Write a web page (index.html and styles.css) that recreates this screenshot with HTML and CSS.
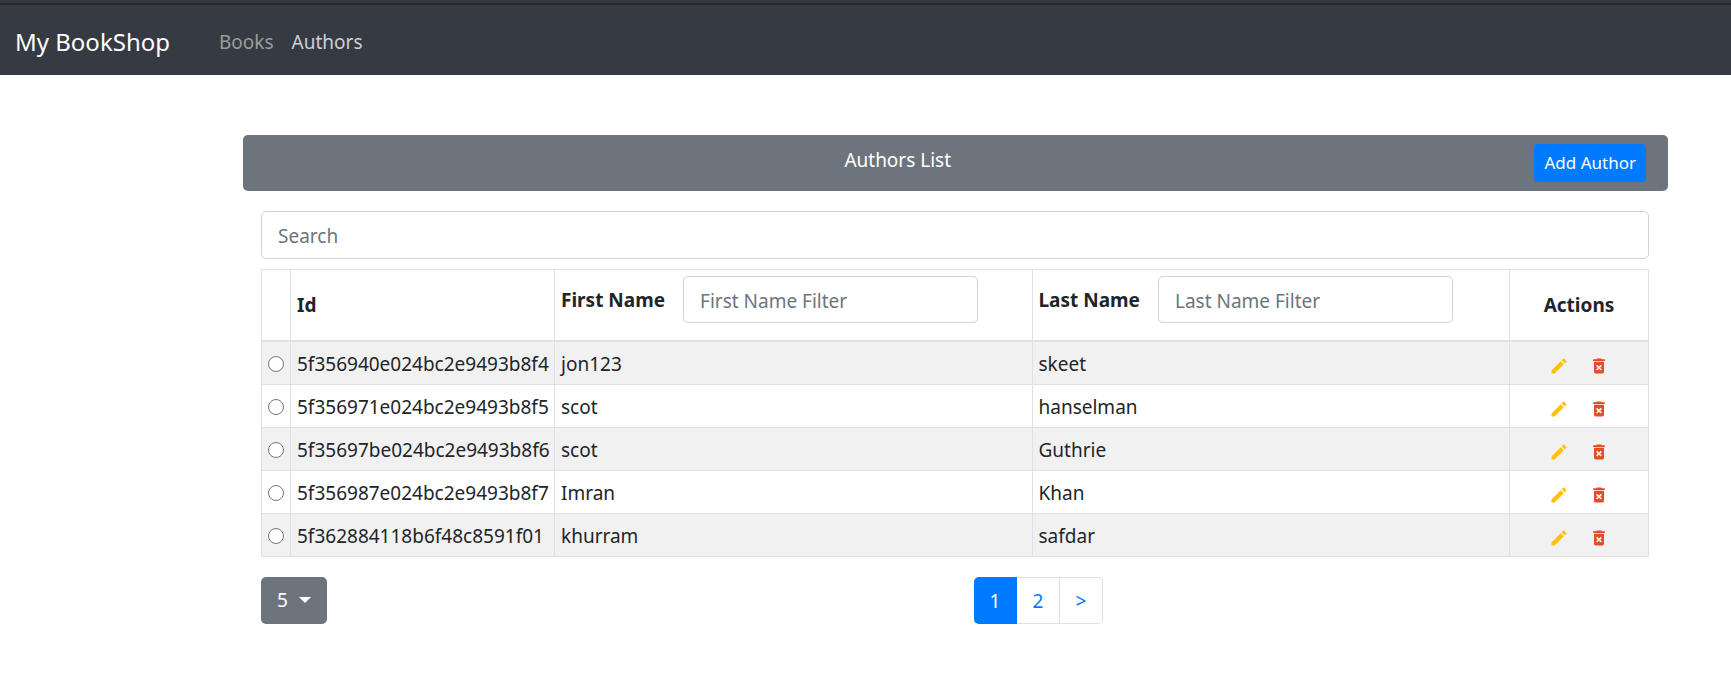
FILE: index.html
```html
<!DOCTYPE html>
<html lang="en">
<head>
<meta charset="utf-8">
<title>My BookShop</title>
<link rel="stylesheet" href="styles.css">
</head>
<body>
<svg class="sprite" aria-hidden="true">
  <symbol id="pencil" viewBox="0 0 24 24"><path d="M20.71 7.04c.39-.39.39-1.04 0-1.41l-2.34-2.34c-.37-.39-1.02-.39-1.41 0l-1.84 1.83 3.75 3.75M3 17.25V21h3.75L17.81 9.93l-3.75-3.75L3 17.25z"/></symbol>
  <symbol id="trash" viewBox="0 0 24 24"><path fill-rule="evenodd" d="M6 19a2 2 0 0 0 2 2h8a2 2 0 0 0 2-2V7H6v12zM8.46 11.88l1.41-1.41L12 12.59l2.12-2.12 1.41 1.41L13.41 14l2.12 2.12-1.41 1.41L12 15.41l-2.12 2.12-1.41-1.41L10.59 14l-2.13-2.12zM15.5 4l-1-1h-5l-1 1H5v2h14V4h-3.5z"/></symbol>
</svg>
<nav class="navbar">
  <a class="brand" href="#">My BookShop</a>
  <a class="nav-link" href="#">Books</a>
  <a class="nav-link active" href="#">Authors</a>
</nav>
<main class="page">
  <header class="card-header">
    <h1 class="title">Authors List</h1>
    <button class="add-button" type="button">Add Author</button>
  </header>
  <section class="content">
    <input class="field search" type="text" placeholder="Search" aria-label="Search">
    <table class="authors">
      <colgroup><col class="col-select"><col class="col-id"><col><col><col class="col-actions"></colgroup>
      <thead>
        <tr>
          <th></th>
          <th>Id</th>
          <th><div class="filter"><label for="first-filter">First Name</label><input class="field" id="first-filter" type="text" placeholder="First Name Filter"></div></th>
          <th><div class="filter"><label for="last-filter">Last Name</label><input class="field" id="last-filter" type="text" placeholder="Last Name Filter"></div></th>
          <th class="actions-head">Actions</th>
        </tr>
      </thead>
      <tbody>
        <tr>
          <td><input class="radio" type="radio" name="author" aria-label="Select jon123 skeet"></td>
          <td>5f356940e024bc2e9493b8f4</td><td>jon123</td><td>skeet</td>
          <td><div class="actions"><button class="icon edit" type="button" aria-label="Edit"><svg><use href="#pencil"/></svg></button><button class="icon delete" type="button" aria-label="Delete"><svg><use href="#trash"/></svg></button></div></td>
        </tr>
        <tr>
          <td><input class="radio" type="radio" name="author" aria-label="Select scot hanselman"></td>
          <td>5f356971e024bc2e9493b8f5</td><td>scot</td><td>hanselman</td>
          <td><div class="actions"><button class="icon edit" type="button" aria-label="Edit"><svg><use href="#pencil"/></svg></button><button class="icon delete" type="button" aria-label="Delete"><svg><use href="#trash"/></svg></button></div></td>
        </tr>
        <tr>
          <td><input class="radio" type="radio" name="author" aria-label="Select scot Guthrie"></td>
          <td>5f35697be024bc2e9493b8f6</td><td>scot</td><td>Guthrie</td>
          <td><div class="actions"><button class="icon edit" type="button" aria-label="Edit"><svg><use href="#pencil"/></svg></button><button class="icon delete" type="button" aria-label="Delete"><svg><use href="#trash"/></svg></button></div></td>
        </tr>
        <tr>
          <td><input class="radio" type="radio" name="author" aria-label="Select Imran Khan"></td>
          <td>5f356987e024bc2e9493b8f7</td><td>Imran</td><td>Khan</td>
          <td><div class="actions"><button class="icon edit" type="button" aria-label="Edit"><svg><use href="#pencil"/></svg></button><button class="icon delete" type="button" aria-label="Delete"><svg><use href="#trash"/></svg></button></div></td>
        </tr>
        <tr>
          <td><input class="radio" type="radio" name="author" aria-label="Select khurram safdar"></td>
          <td>5f362884118b6f48c8591f01</td><td>khurram</td><td>safdar</td>
          <td><div class="actions"><button class="icon edit" type="button" aria-label="Edit"><svg><use href="#pencil"/></svg></button><button class="icon delete" type="button" aria-label="Delete"><svg><use href="#trash"/></svg></button></div></td>
        </tr>
      </tbody>
    </table>
    <footer class="table-footer">
      <div class="page-size">
        <select aria-label="Rows per page"><option>5</option><option>10</option><option>25</option></select>
      </div>
      <nav class="pagination" aria-label="Pages">
        <a class="page-link current" href="#">1</a>
        <a class="page-link" href="#">2</a>
        <a class="page-link" href="#" aria-label="Next page">&gt;</a>
      </nav>
    </footer>
  </section>
</main>
</body>
</html>
```

FILE: styles.css
```css
* { box-sizing: border-box; }

body {
  margin: 0;
  background: #fff;
  color: #212529;
  font: 19px/30px "Segoe UI", "Noto Sans", "Open Sans", sans-serif;
}

input, select, button { font: inherit; }
a { text-decoration: none; }
.sprite { display: none; }

.navbar {
  display: flex;
  align-items: center;
  height: 75px;
  padding: 8px 15px 0;
  background: linear-gradient(#343a40 3px, #272829 3px, #272829 5px, #363a42 5px);
}
.brand { margin-right: 40px; color: #fff; font-size: 24px; }
.nav-link { padding: 0 9px; color: #999c9f; }
.nav-link.active { color: #ced0d2; }

.page { padding: 60px 63px 0 243px; }

.card-header {
  display: flex;
  height: 56px;
  padding: 9px 22px 9px 18px;
  border-radius: 5px;
  background: #6c757d;
}
.title {
  flex: 1;
  margin: 0;
  color: #fff;
  font-size: 19px;
  font-weight: 400;
  line-height: 32px;
  text-align: center;
}
.add-button {
  height: 38px;
  padding: 0 10px;
  border: 0;
  border-radius: 4px;
  background: #007bff;
  color: #fff;
  font-size: 17px;
}

.content { padding: 20px 19px 0 18px; }

.field {
  height: 47px;
  padding: 2px 16px 0;
  border: 1px solid #ced4da;
  border-radius: 5px;
  background: #fff;
  color: #495057;
}
.field::placeholder { color: #6c757d; opacity: 1; }
.search { display: block; width: 100%; height: 48px; margin-bottom: 10px; }

.authors {
  width: 100%;
  border-collapse: collapse;
  table-layout: fixed;
}
.col-select { width: 29px; }
.col-id { width: 264px; }
.col-actions { width: 139px; }
.authors th, .authors td {
  padding: 7px 6px 5px;
  border: 1px solid #dee2e6;
  text-align: left;
  white-space: nowrap;
}
.authors th {
  height: 71px;
  padding: 6px;
  border-bottom-width: 2px;
  font-weight: 700;
}
.authors td { height: 43px; }
.authors tbody tr:nth-child(odd) { background: #f1f1f1; }
.authors .actions-head { text-align: center; }

.filter { display: flex; align-items: center; gap: 18px; padding-bottom: 10px; }
.filter .field { width: 295px; font-weight: 400; }

.radio { display: block; width: 16px; height: 16px; margin: 0; }

.actions { display: flex; justify-content: center; gap: 20px; padding-top: 4px; }
.icon {
  width: 20px;
  height: 20px;
  padding: 0;
  border: 0;
  background: none;
}
.icon svg { display: block; width: 20px; height: 20px; fill: currentColor; }
.edit { color: #ffc107; }
.delete { color: #e44d26; }

.table-footer { display: grid; grid-template-columns: 1fr 1fr; padding-top: 20px; }
.page-size { display: grid; justify-content: start; align-items: center; }
.page-size select, .page-size::after { grid-area: 1 / 1; }
.page-size select {
  width: 66px;
  height: 47px;
  padding: 0 16px;
  border: 0;
  border-radius: 5px;
  appearance: none;
  background: #6c757d;
  color: #fff;
}
.page-size::after {
  content: "";
  justify-self: end;
  margin-right: 16px;
  border: 6px solid transparent;
  border-top-color: #fff;
  border-bottom: 0;
  pointer-events: none;
}
.pagination { display: flex; padding-left: 19px; }
.page-link {
  min-width: 43px;
  height: 47px;
  padding: 0 15px;
  border: 1px solid #dee2e6;
  border-left: 0;
  color: #007bff;
  line-height: 47px;
  text-align: center;
}
.page-link:last-child { border-radius: 0 5px 5px 0; }
.page-link.current {
  border-color: #007bff;
  border-radius: 5px 0 0 5px;
  background: #007bff;
  color: #fff;
}
```
